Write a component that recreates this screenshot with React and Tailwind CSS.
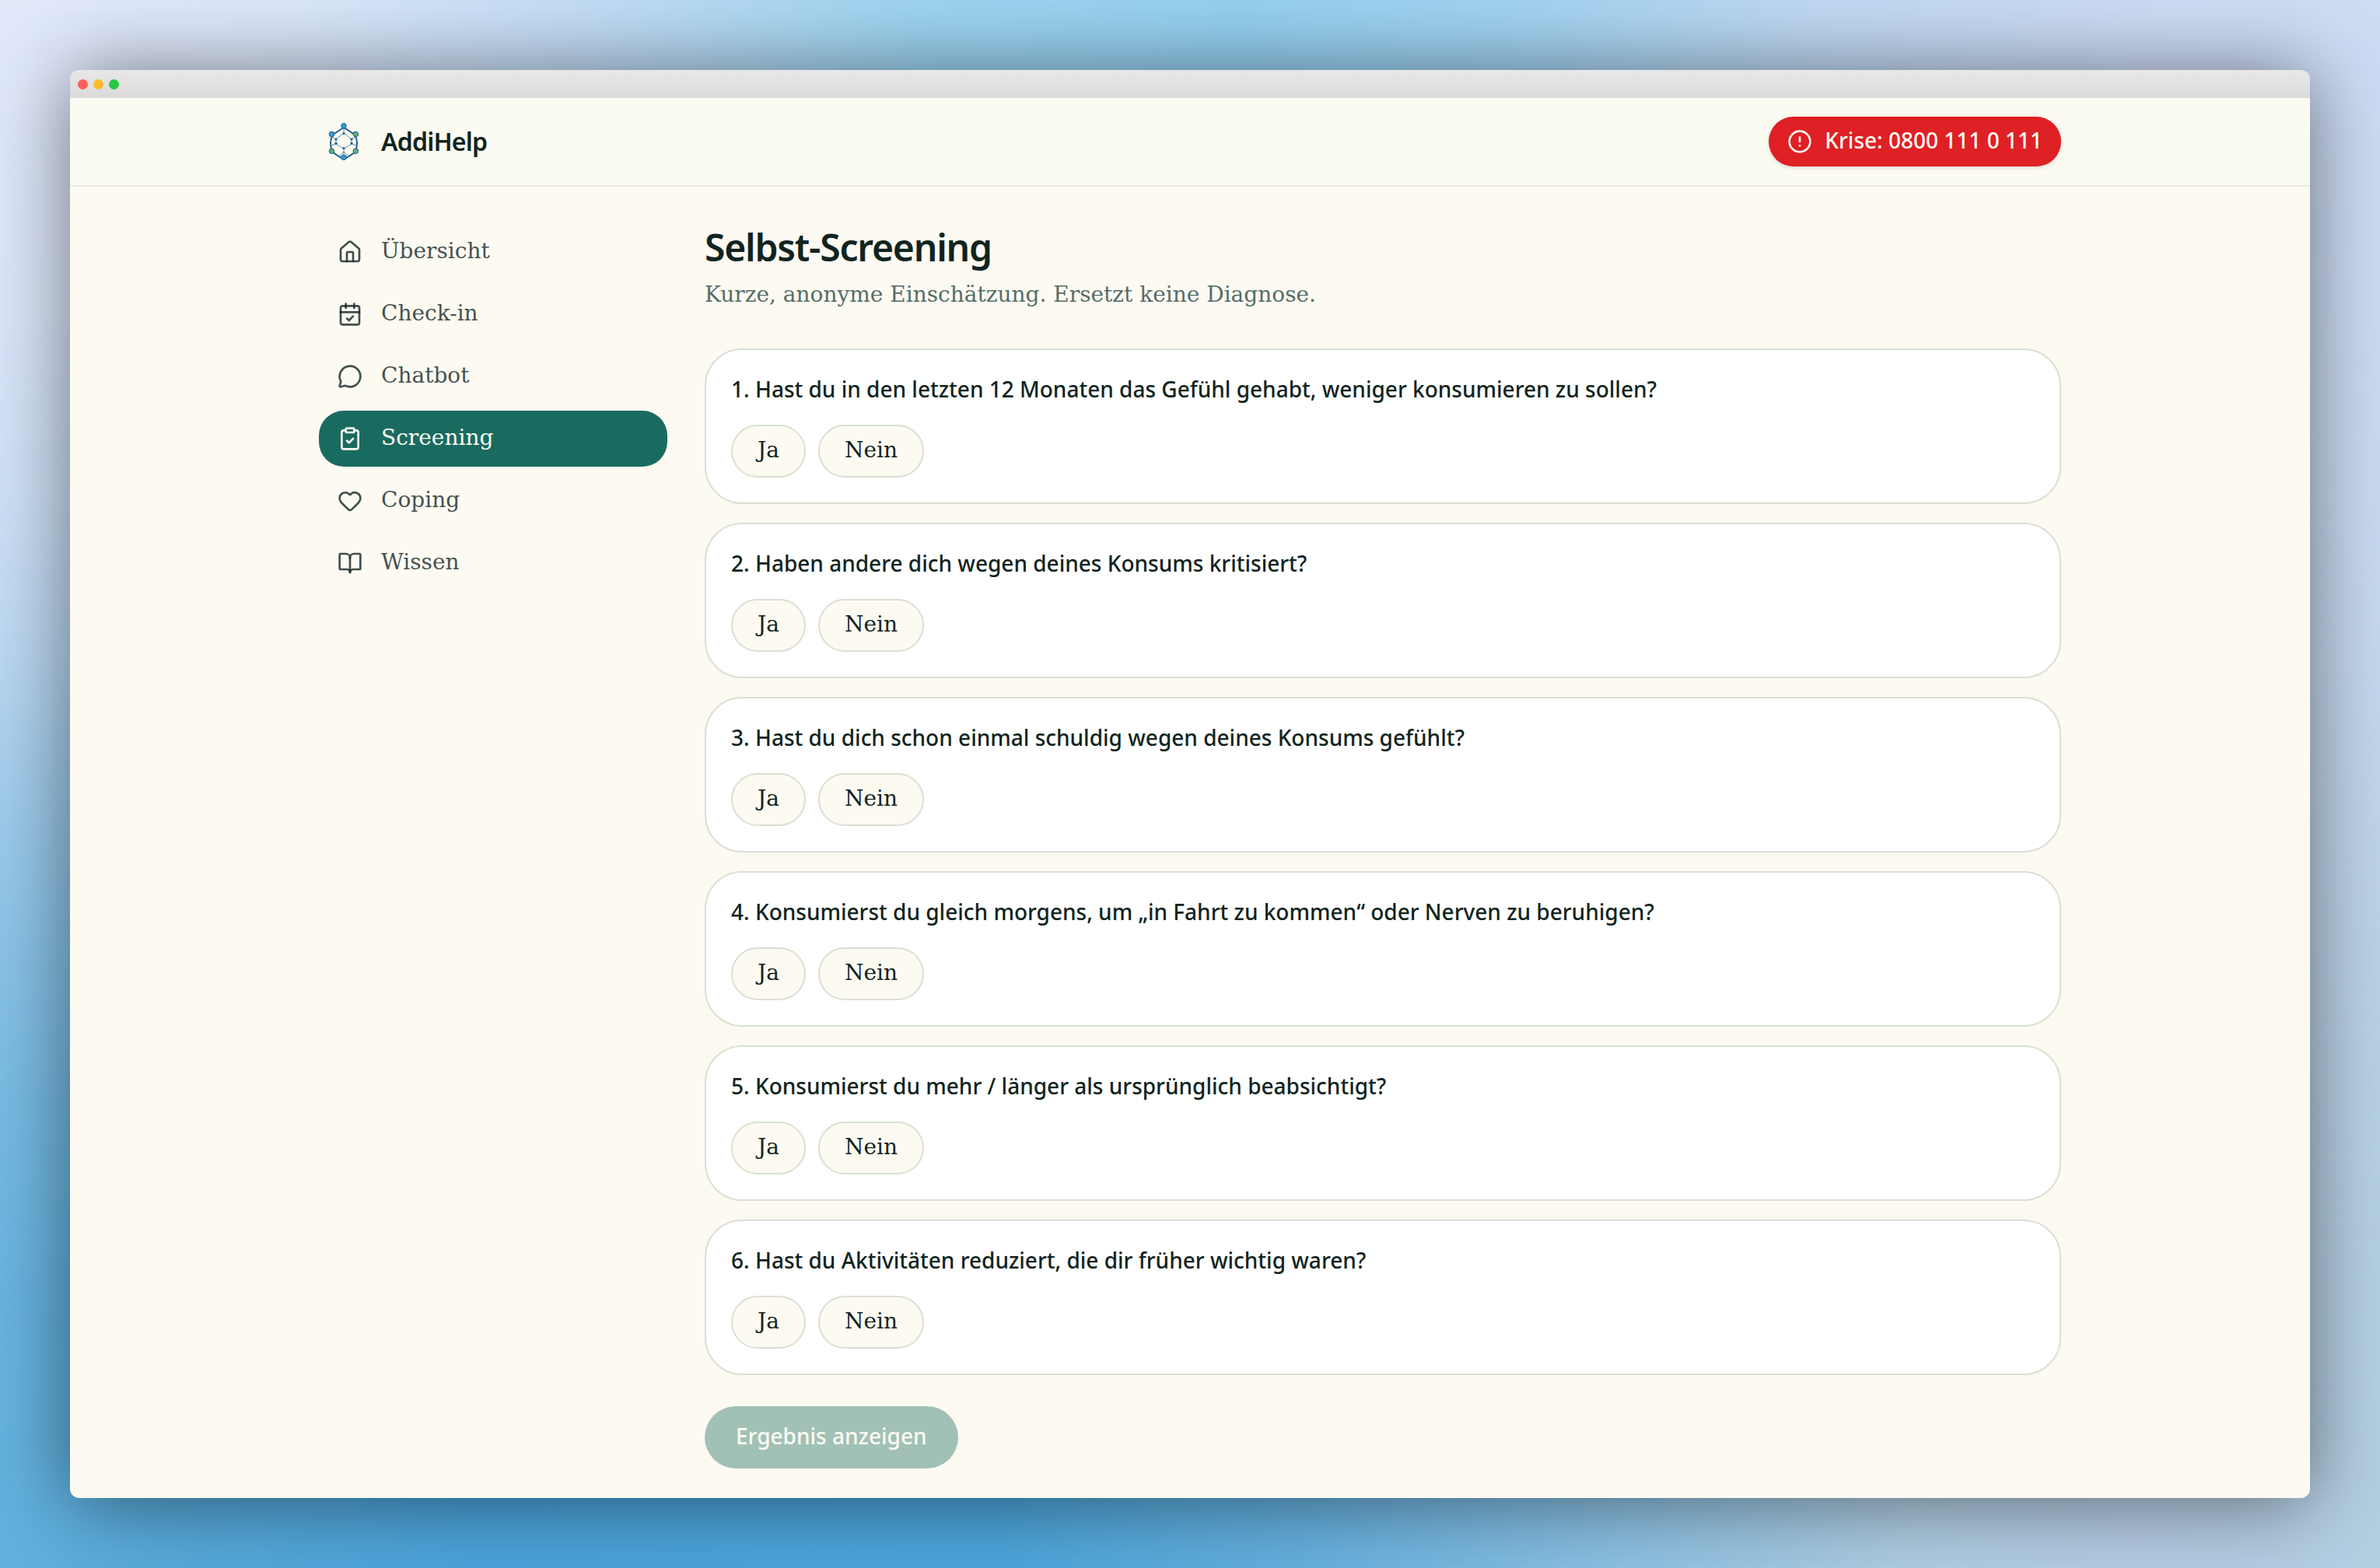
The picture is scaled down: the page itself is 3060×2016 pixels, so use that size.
import { House, CalendarCheck, MessageCircle, ClipboardCheck, Heart, BookOpen, CircleAlert } from "lucide-react";

const NAV = [
  { label: "Übersicht", Icon: House },
  { label: "Check-in", Icon: CalendarCheck },
  { label: "Chatbot", Icon: MessageCircle },
  { label: "Screening", Icon: ClipboardCheck, active: true },
  { label: "Coping", Icon: Heart },
  { label: "Wissen", Icon: BookOpen },
];

const QUESTIONS = [
  "Hast du in den letzten 12 Monaten das Gefühl gehabt, weniger konsumieren zu sollen?",
  "Haben andere dich wegen deines Konsums kritisiert?",
  "Hast du dich schon einmal schuldig wegen deines Konsums gefühlt?",
  "Konsumierst du gleich morgens, um „in Fahrt zu kommen“ oder Nerven zu beruhigen?",
  "Konsumierst du mehr / länger als ursprünglich beabsichtigt?",
  "Hast du Aktivitäten reduziert, die dir früher wichtig waren?",
];

function Logo() {
  return (
    <svg viewBox="0 0 64 64" className="size-16 shrink-0" fill="none" stroke="#1f5f8f">
      <path strokeWidth="1.9" d="M32 14 L18 23 C14 30 14 38 18 46 L32 55 L46 46 C50 38 50 30 46 23 Z" />
      <path strokeWidth="0.9" opacity="0.8" d="M32 12 V21 L42 29 V35 L32 41.500 L22 35 V29 L32 21 M32 41.500 V52 M22 29 L16 25 M22 35 L16 37 M42 29 L48 25 M42 35 L48 37 M27 50 L32 45 L37 50" />
      <g fill="#1f5f8f" stroke="none">
        <circle cx="32" cy="21.500" r="1.600" />
        <circle cx="42" cy="29" r="1.600" />
        <circle cx="42" cy="34.300" r="1.600" />
        <circle cx="32" cy="40.500" r="1.600" />
        <circle cx="22" cy="34.300" r="1.600" />
        <circle cx="22" cy="29" r="1.600" />
      </g>
      <g strokeWidth="1" fill="#2fa0d6">
        <circle cx="32" cy="11.800" r="3.300" />
        <circle cx="16.500" cy="22.500" r="3.300" />
        <circle cx="32" cy="52.300" r="3.300" />
      </g>
      <g strokeWidth="1" fill="#5fae6e">
        <circle cx="47.300" cy="22.500" r="3.300" />
        <circle cx="16.500" cy="44.300" r="3.300" />
        <circle cx="47.300" cy="44.300" r="3.300" />
      </g>
    </svg>
  );
}

function Answer({ children }) {
  return (
    <button className="rounded-full border-2 border-[#d9e0d2] bg-[#fdfaf1] px-8 pt-3 pb-3.5 text-[28px] leading-[38px]">
      {children}
    </button>
  );
}

function Question({ number, text }) {
  return (
    <section className="rounded-[48px] border-2 border-[#d9e0d2] bg-white p-8">
      <p className="pb-1 font-['Noto_Sans'] text-[28px] leading-9 font-medium">{number}. {text}</p>
      <div className="mt-6 flex gap-4">
        <Answer>Ja</Answer>
        <Answer>Nein</Answer>
      </div>
    </section>
  );
}

export default function App() {
  return (
    <div className="relative isolate h-[2016px] w-[3060px] overflow-hidden bg-[linear-gradient(90deg,#e2e9fb_0%,#dce7fa_12%,#c2dcf5_25%,#9fd4f0_38%,#95d0ef_52%,#a4d3f1_65%,#bfd8f2_76%,#cddbf4_90%,#cedcf4_100%)] p-[90px]">
      <div className="absolute inset-0 -z-10 bg-[linear-gradient(90deg,#62b1de_0%,#56a9da_8%,#4ba3da_20%,#4ca5da_42%,#66b0de_55%,#8cc0e2_68%,#aecce1_80%,#b4cbe3_90%,#b3cfe2_100%)] mask-[linear-gradient(180deg,transparent_0%,rgba(0,0,0,0.05)_20%,rgba(0,0,0,0.15)_32%,rgba(0,0,0,0.3)_42%,rgba(0,0,0,0.53)_52%,rgba(0,0,0,0.7)_62%,rgba(0,0,0,0.84)_71%,rgba(0,0,0,0.95)_82%,black_96%)]" />
      <div className="flex h-[1836px] flex-col overflow-hidden rounded-[12px] font-['DejaVu_Serif',serif] text-[#102420] shadow-[0_4px_100px_rgba(0,0,0,0.5)]">
        <div className="flex h-9 shrink-0 items-center gap-[7px] bg-linear-to-b from-[#e8e8e8] to-[#dadada] pl-2.5">
          <span className="size-[13px] rounded-full bg-[#ff5f57]" />
          <span className="size-[13px] rounded-full bg-[#febc2e]" />
          <span className="size-[13px] rounded-full bg-[#28c840]" />
        </div>
        <header className="shrink-0 border-b-2 border-[#e6ece2] bg-[#fcfbf2]">
          <div className="mx-auto flex w-[2304px] items-center justify-between px-8 py-6">
            <div className="flex items-center gap-4">
              <Logo />
              <span className="font-['Noto_Sans'] text-[32px] leading-12 font-semibold tracking-tight">AddiHelp</span>
            </div>
            <a className="flex items-center gap-4 rounded-full bg-[#df2025] px-6 py-3 font-['Noto_Sans'] text-[28px] leading-10 font-medium text-[#fdfbf3] shadow-[0_2px_6px_rgba(0,0,0,0.1),0_2px_4px_-2px_rgba(0,0,0,0.1)]">
              <CircleAlert className="size-8" />
              <span className="pb-1 leading-9">Krise: 0800 111 0 111</span>
            </a>
          </div>
        </header>
        <div className="grow bg-[#fdfaf2]">
          <div className="mx-auto flex w-[2304px] gap-12 px-8 pt-12">
            <nav className="flex w-[448px] shrink-0 flex-col gap-2">
              {NAV.map(({ label, Icon, active }) => (
                <a
                  key={label}
                  className={
                    active
                      ? "flex items-center gap-6 rounded-[32px] bg-[#1a6b5f] px-6 py-4 text-[28px] text-[#fdfbf3]"
                      : "flex items-center gap-6 rounded-[32px] px-6 py-4 text-[28px] text-[#102420]/80"
                  }
                >
                  <Icon className="size-8" />
                  <span className="pb-0.5 leading-[38px]">{label}</span>
                </a>
              ))}
            </nav>
            <main className="grow">
              <h1 className="pb-1 font-['Noto_Sans'] text-[48px] leading-15 font-semibold tracking-tight">Selbst-Screening</h1>
              <p className="mt-2 pb-0.5 text-[28px] leading-[38px] text-[#556d67]">
                Kurze, anonyme Einschätzung. Ersetzt keine Diagnose.
              </p>
              <div className="mt-12 flex flex-col gap-6">
                {QUESTIONS.map((text, i) => (
                  <Question key={text} number={i + 1} text={text} />
                ))}
              </div>
              <button className="mt-10 rounded-full bg-[#a1c1b6] px-10 pt-5 pb-6 font-['Noto_Sans'] text-[28px] leading-9 font-medium text-[#fdfbf3]">
                Ergebnis anzeigen
              </button>
            </main>
          </div>
        </div>
      </div>
    </div>
  );
}
